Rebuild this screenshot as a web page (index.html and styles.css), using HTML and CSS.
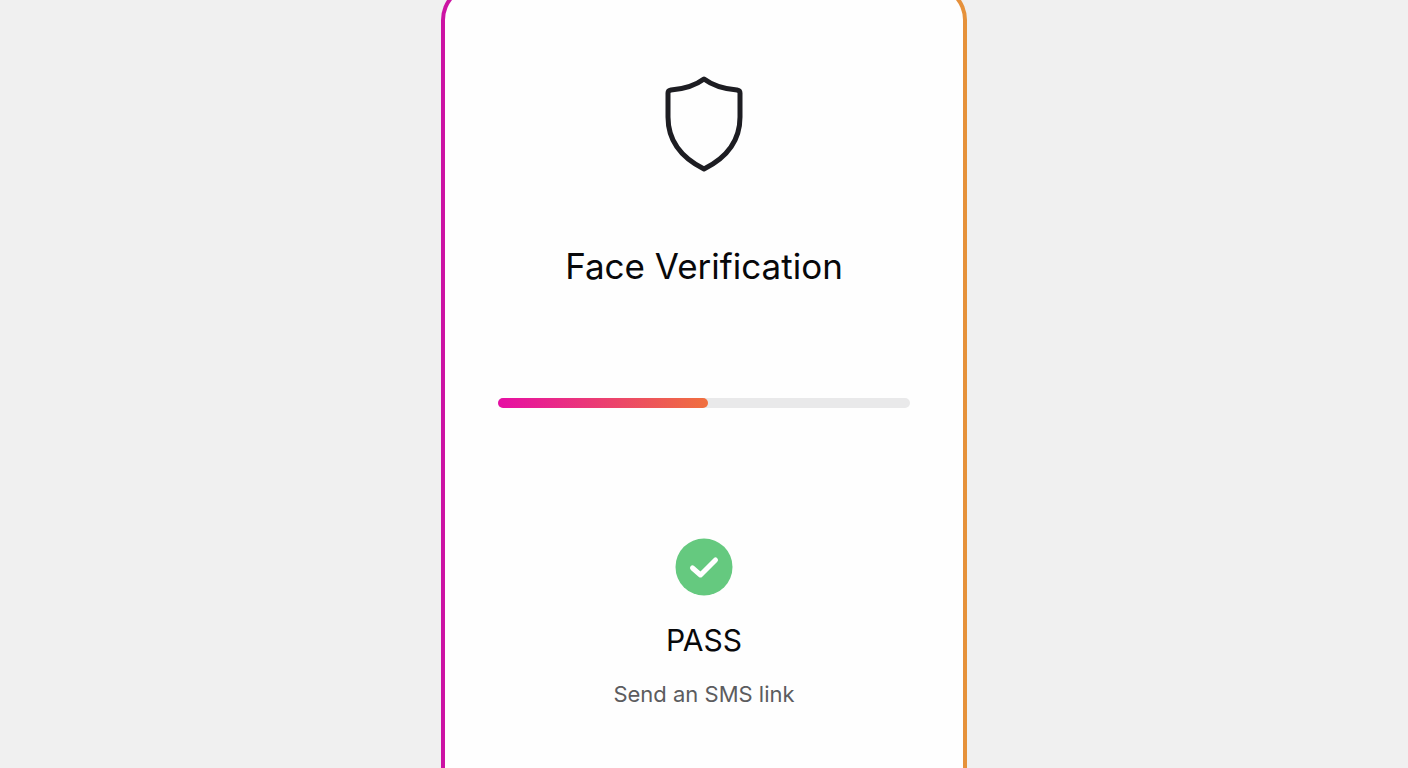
FILE: index.html
```html
<!DOCTYPE html>
<html lang="en">
<head>
    <meta charset="UTF-8">
    <meta name="viewport" content="width=device-width, initial-scale=1.0">
    <title>Face Verification</title>
    <link rel="stylesheet" href="styles.css">
</head>
<body>
    <main class="card">
        <svg class="shield" viewBox="0 0 80 98" aria-hidden="true">
            <path d="M40 4 C32 10 20 14 7 15 Q4 15.500 4 18 V42 C4 69 20 84 40 94 C60 84 76 69 76 42 V18 Q76 15.500 73 15 C60 14 48 10 40 4 Z"/>
        </svg>

        <h1 class="title">Face Verification</h1>

        <div class="progress" role="progressbar" aria-label="Verification progress" aria-valuemin="0" aria-valuemax="100" aria-valuenow="51">
            <div class="progress-fill" style="width: 51%"></div>
        </div>

        <svg class="check" viewBox="0 0 58 58" aria-hidden="true">
            <circle cx="29" cy="29" r="28.500"/>
            <path d="M17.500 30 L25.500 37 L40.500 22"/>
        </svg>
        <p class="result">PASS</p>
        <a href="#" class="sms-link">Send an SMS link</a>
    </main>
</body>
</html>
```

FILE: styles.css
```css
* { box-sizing: border-box; }
body {
    margin: 0;
    background: #f0f0f0;
    font-family: Inter, "Liberation Sans", sans-serif;
}
/* the card's top edge sits just above the window */
.card {
    display: flex;
    flex-direction: column;
    align-items: center;
    width: 100%;
    max-width: 526px;
    min-height: calc(100vh + 16px);
    margin: -16px auto 0;
    padding: 87px 53px 40px;
    border: 4px solid transparent;
    border-bottom: none;
    border-radius: 36px 36px 0 0;
    background:
        linear-gradient(#fefefe, #fefefe) padding-box,
        linear-gradient(90deg, #cc12a4, #e6923a) border-box;
}
.shield { width: 80px; height: 98px; }
.shield path {
    fill: none;
    stroke: #1d1d22;
    stroke-width: 5;
    stroke-linejoin: round;
}
.title {
    margin: 69px 0 0;
    font-size: 35px;
    font-weight: 400;
    line-height: 48px;
    color: #08080a;
}
.progress {
    width: 100%;
    height: 10px;
    margin-top: 108px;
    border-radius: 5px;
    background: #e9e9ea;
}
.progress-fill {
    height: 100%;
    border-radius: 5px;
    background: linear-gradient(90deg, #e60ea4, #f0703e);
}
.check {
    width: 58px;
    height: 58px;
    margin-top: 130px;
}
.check circle { fill: #65c97f; }
.check path {
    fill: none;
    stroke: #fff;
    stroke-width: 5;
    stroke-linecap: round;
    stroke-linejoin: round;
}
.result {
    margin: 24px 0 0;
    font-size: 30px;
    line-height: 40px;
    color: #08080a;
}
.sms-link {
    margin-top: 20px;
    font-size: 22px;
    line-height: 28px;
    color: #5c5c5e;
    text-decoration: none;
}
```
